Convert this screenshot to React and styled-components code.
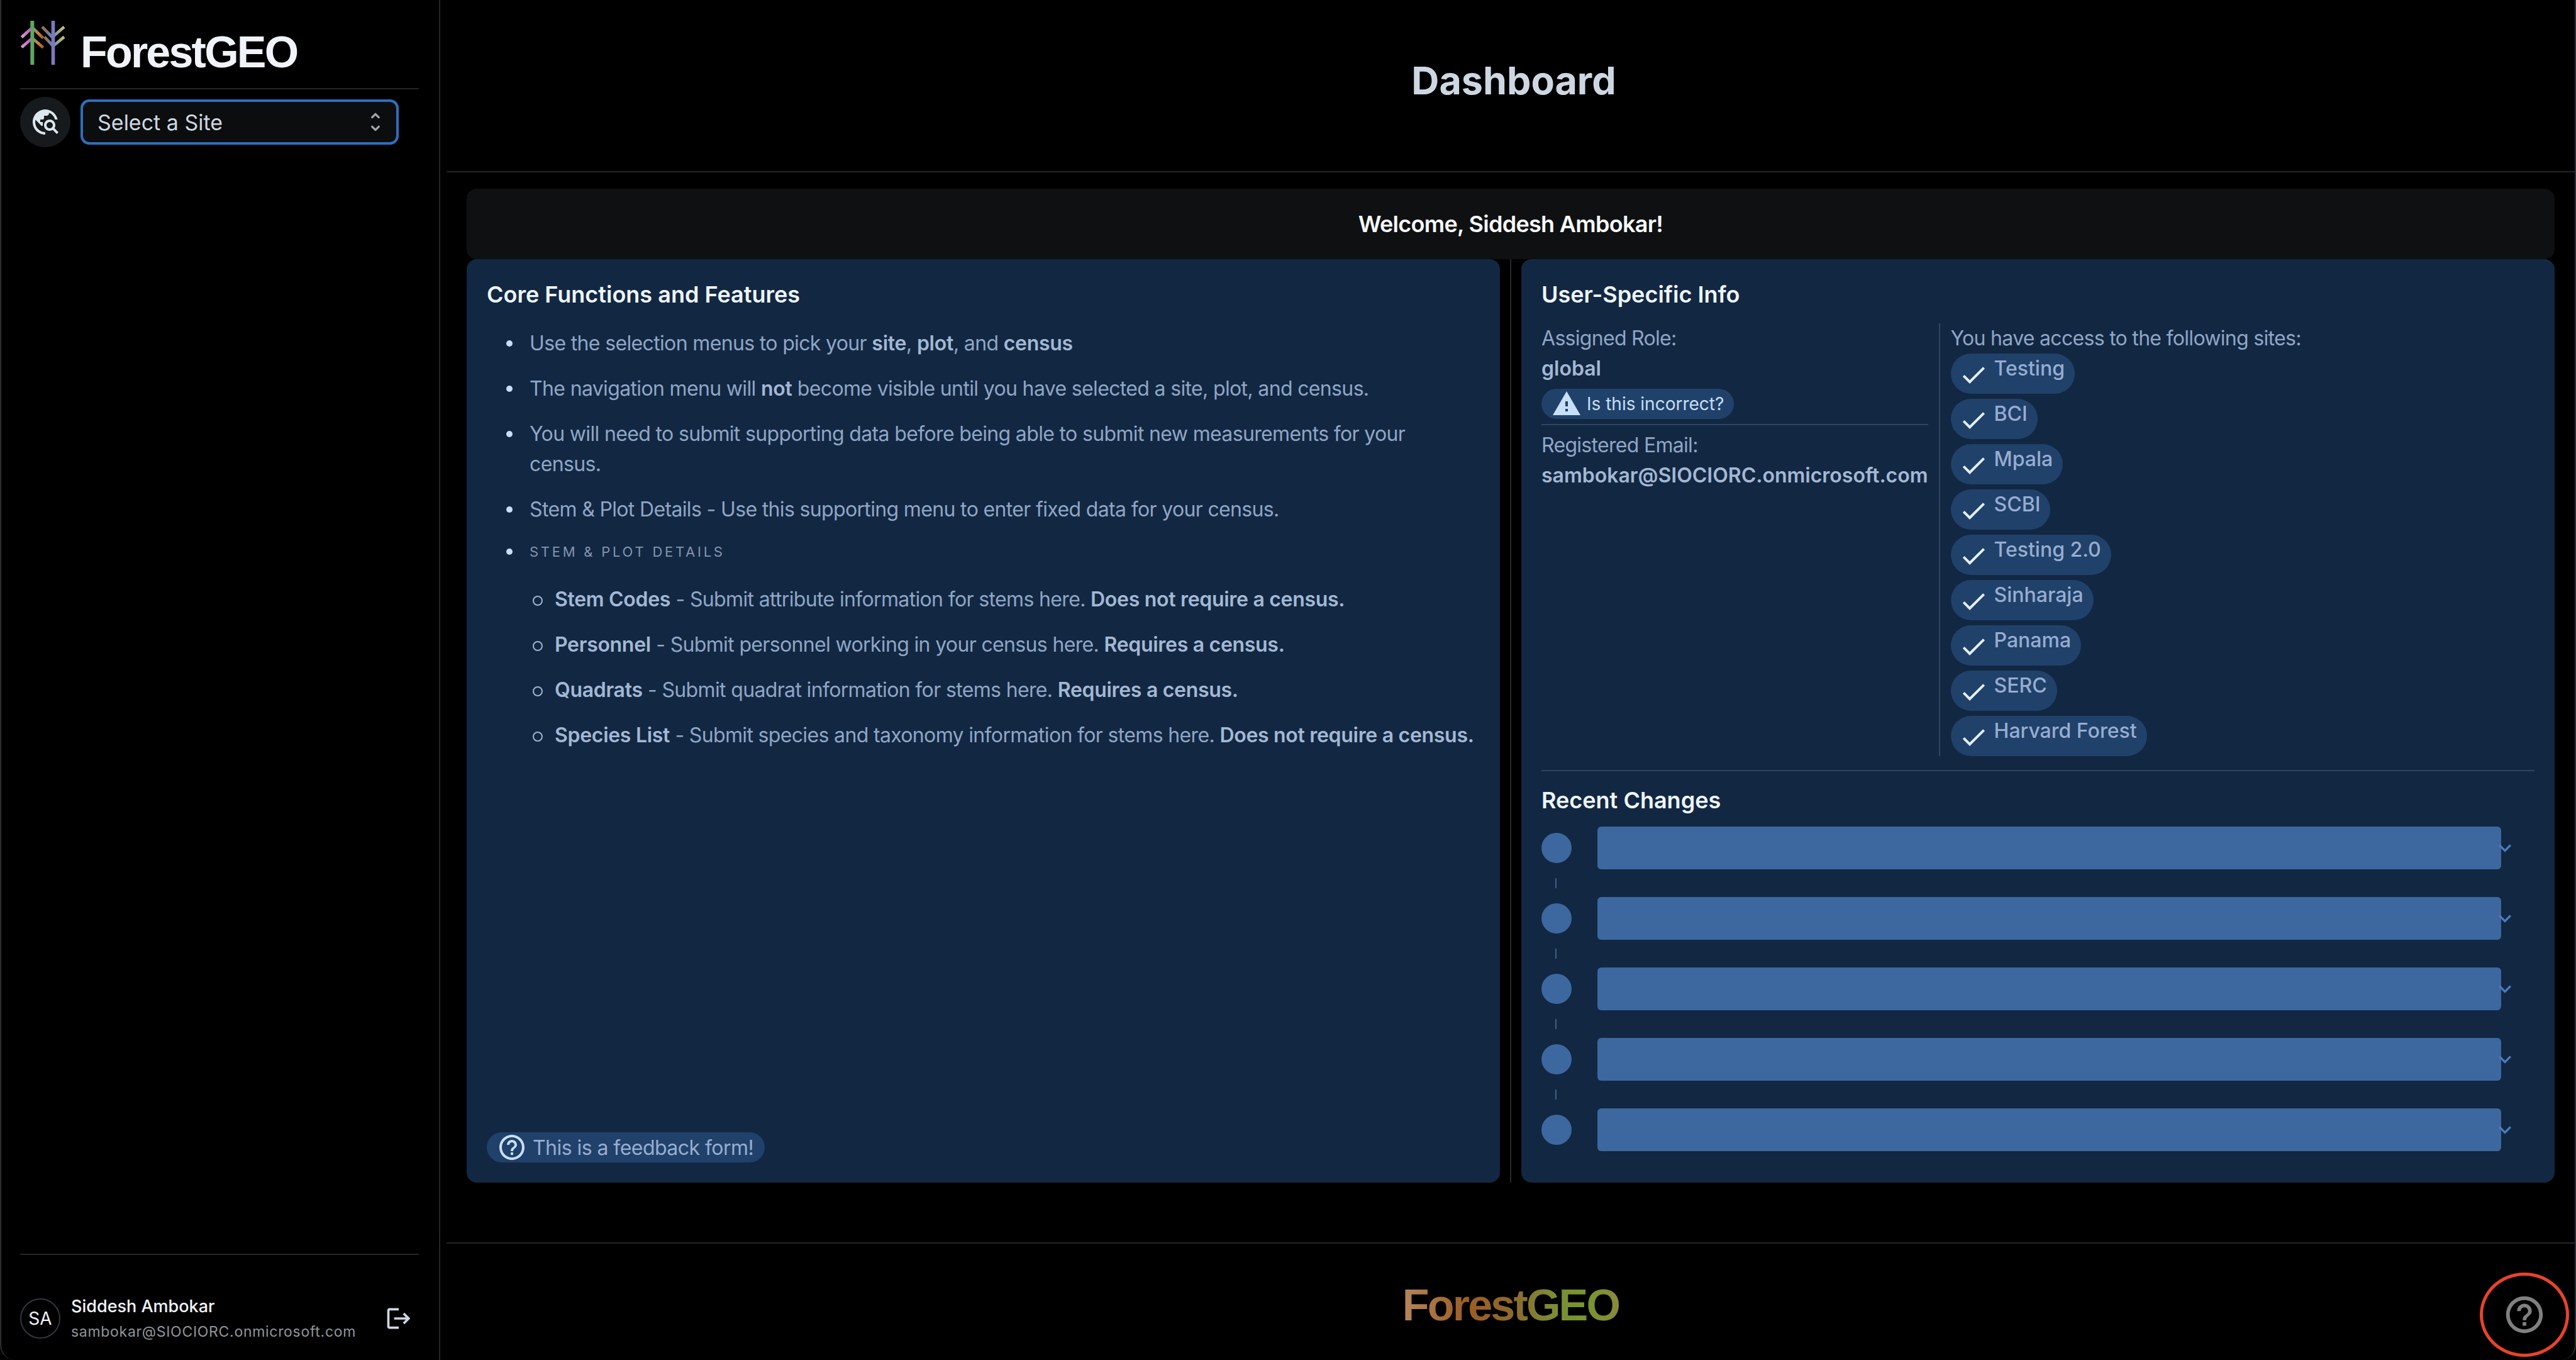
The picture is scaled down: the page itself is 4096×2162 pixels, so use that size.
import React from "react"
import styled, { createGlobalStyle } from "styled-components"
import {
  MdTravelExplore,
  MdLogout,
  MdHelpOutline,
  MdWarning,
  MdCheck,
  MdExpandMore,
} from "react-icons/md"

const sites = ["Testing", "BCI", "Mpala", "SCBI", "Testing 2.0", "Sinharaja", "Panama", "SERC", "Harvard Forest"]

const GlobalStyle = createGlobalStyle`
  html, body {
    margin: 0;
    padding: 0;
    background: #000;
  }
  body {
    font-family: Inter, "Liberation Sans", sans-serif;
    -webkit-font-smoothing: antialiased;
  }
  * {
    box-sizing: border-box;
  }
`

const Frame = styled.div`
  position: relative;
  display: flex;
  width: 4096px;
  height: 2162px;
  overflow: hidden;
  background: #000;
  border-left: 2px solid #2c2e31;
  border-right: 2px solid #2c2e31;
  border-radius: 0 0 24px 24px;
`

const Sidebar = styled.aside`
  display: flex;
  flex-direction: column;
  flex: 0 0 698px;
  padding: 33px 32px 16px 30px;
  border-right: 2px solid #232527;
`

const Brand = styled.div`
  display: flex;
  align-items: flex-start;
  gap: 24px;
  height: 109px;
  border-bottom: 2px solid #232527;
`

const BrandName = styled.span`
  margin-top: 10px;
  font-family: "Liberation Sans", Arial, sans-serif;
  font-size: 70px;
  line-height: 80px;
  font-weight: 700;
  letter-spacing: -2.8px;
  color: #f0f4f8;
`

const SiteRow = styled.div`
  display: flex;
  align-items: center;
  gap: 16px;
  margin-top: 12px;
`

const IconCircle = styled.div`
  display: flex;
  align-items: center;
  justify-content: center;
  width: 80px;
  height: 80px;
  border-radius: 50%;
  background: #171a1c;
  color: #dde7ee;
  font-size: 48px;
`

const SiteSelect = styled.div`
  display: flex;
  align-items: center;
  justify-content: space-between;
  width: 506px;
  height: 72px;
  padding: 0 13px 0 23px;
  background: #0b0d0e;
  border: 4px solid #2f6fc0;
  border-radius: 14px;
  font-size: 34px;
  color: #cdd7e1;
`

const Spacer = styled.div`
  flex: 1;
`

const UserRow = styled.div`
  display: flex;
  align-items: center;
  height: 153px;
  padding-top: 51px;
  border-top: 2px solid #232527;
`

const Avatar = styled.div`
  display: flex;
  align-items: center;
  justify-content: center;
  flex: 0 0 64px;
  height: 64px;
  border: 2px solid #32383e;
  border-radius: 50%;
  font-size: 28px;
  color: #f0f4f8;
`

const UserText = styled.div`
  display: flex;
  flex-direction: column;
  gap: 8px;
  margin-left: 17px;
  flex: 1;
`

const UserName = styled.span`
  font-size: 27px;
  line-height: 34px;
  font-weight: 500;
  color: #f0f4f8;
`

const UserEmail = styled.span`
  font-size: 23px;
  line-height: 30px;
  letter-spacing: 0.7px;
  color: #8f959b;
`

const LogoutIcon = styled.div`
  display: flex;
  margin-right: 10px;
  font-size: 44px;
  color: #cdd7e1;
`

const Main = styled.main`
  display: flex;
  flex-direction: column;
  flex: 1;
  min-width: 0;
  margin-left: 10px;
`

const Header = styled.header`
  display: flex;
  align-items: center;
  justify-content: center;
  flex: 0 0 274px;
  padding: 0 0 16px 10px;
  border-bottom: 2px solid #232527;
  font-size: 61px;
  font-weight: 700;
  color: #cdd7e1;
`

const Content = styled.div`
  display: flex;
  flex-direction: column;
  flex: 0 0 1703px;
  padding: 26px 32px 0 32px;
  border-bottom: 2px solid #232527;
`

const WelcomeBar = styled.div`
  display: flex;
  align-items: center;
  justify-content: center;
  flex: 0 0 112px;
  background: #0e1012;
  border-radius: 16px;
  font-size: 36px;
  font-weight: 600;
  letter-spacing: -0.7px;
  color: #f8fafc;
`

const Columns = styled.div`
  display: flex;
  height: 1468px;
`

const Card = styled.section`
  display: flex;
  flex-direction: column;
  flex: 1;
  min-width: 0;
  padding: 32px;
  background: #122742;
  border-radius: 16px;
`

const ColumnRule = styled.div`
  flex: 0 0 2px;
  margin: 0 16px;
  background: #25282b;
`

const CardTitle = styled.h2`
  margin: ${(p) => p.$top || 0}px 0 0;
  font-size: 36px;
  line-height: 48px;
  font-weight: 600;
  color: #eef5fc;
`

const BulletList = styled.ul`
  display: flex;
  flex-direction: column;
  gap: 24px;
  margin: 30px 0 0;
  padding: 0 0 0 68px;
  list-style: none;
  flex: 1;
`

const SubList = styled.ul`
  display: flex;
  flex-direction: column;
  gap: 24px;
  margin: 33px 0 0;
  padding: 0 0 0 40px;
  list-style: none;
`

const Item = styled.li`
  position: relative;
  font-size: 32px;
  line-height: 48px;
  letter-spacing: -0.65px;
  color: #8fa6c4;
  &::before {
    content: "";
    position: absolute;
    left: -37px;
    top: 19px;
    width: 10px;
    height: 10px;
    border-radius: 50%;
    background: #c7dff7;
  }
`

const OverlineItem = styled(Item)`
  &::before {
    top: 14px;
  }
`

const SubItem = styled(Item)`
  &::before {
    left: -35px;
    top: 18px;
    width: 12px;
    height: 12px;
    background: none;
    border: 2px solid #9fb4cf;
  }
`

const Strong = styled.b`
  font-weight: 600;
  letter-spacing: -0.3px;
  color: #a3b8d3;
`

const Overline = styled.span`
  display: block;
  font-size: 22px;
  line-height: 38px;
  letter-spacing: 3.75px;
  text-transform: uppercase;
  color: #8195af;
`

const Pill = styled.div`
  display: inline-flex;
  align-items: center;
  align-self: flex-start;
  height: 48px;
  background: #20416a;
  border-radius: 24px;
  color: #97add0;
`

const FeedbackPill = styled(Pill)`
  gap: 9px;
  padding: 0 18px 0 16px;
  font-size: 32px;
  letter-spacing: -0.55px;
  svg {
    font-size: 48px;
    color: #c7dff7;
  }
`

const WarningPill = styled(Pill)`
  gap: 8px;
  margin-top: 8px;
  padding: 0 16px;
  font-size: 28px;
  color: #c7dff7;
  svg {
    font-size: 48px;
    color: #c7dff7;
  }
`

const InfoRow = styled.div`
  display: flex;
  margin-top: 22px;
`

const InfoLeft = styled.div`
  display: flex;
  flex-direction: column;
  flex: 0 0 614px;
`

const InfoRule = styled.div`
  flex: 0 0 2px;
  margin: 0 17px;
  background: #2f4560;
`

const InfoRight = styled.div`
  display: flex;
  flex-direction: column;
  align-items: flex-start;
`

const InfoLabel = styled.div`
  margin-top: ${(p) => p.$top || 0}px;
  font-size: 32px;
  line-height: 48px;
  letter-spacing: -0.7px;
  color: #8fa6c4;
`

const InfoValue = styled.div`
  font-size: 32px;
  line-height: 48px;
  font-weight: 600;
  color: #a3b8d3;
  white-space: nowrap;
`

const HRule = styled.div`
  height: 2px;
  background: #2f4560;
  margin: ${(p) => p.$margin};
`

const SiteChips = styled.div`
  display: flex;
  flex-direction: column;
  align-items: flex-start;
  gap: 8px;
`

const SiteChip = styled.div`
  display: flex;
  align-items: flex-start;
  gap: 9px;
  height: 64px;
  padding: 0 16px 0 12px;
  background: #20416a;
  border-radius: 32px;
  font-size: 32px;
  line-height: 48px;
  font-weight: 500;
  color: #97add0;
  svg {
    margin-top: 10px;
    font-size: 48px;
    color: #e3effb;
  }
`

const Timeline = styled.div`
  display: flex;
  flex-direction: column;
  gap: 44px;
  margin-top: 18px;
`

const TimelineRow = styled.div`
  position: relative;
  display: flex;
  align-items: center;
  gap: 41px;
  height: 68px;
`

const Dot = styled.div`
  flex: 0 0 48px;
  height: 48px;
  border-radius: 50%;
  background: #3c689f;
`

const Connector = styled.div`
  position: absolute;
  left: 22px;
  top: 82px;
  width: 2px;
  height: 16px;
  background: #3f5f86;
`

const Bar = styled.div`
  flex: 0 0 1437px;
  height: 68px;
  border-radius: 6px;
  background: #3c689f;
`

const Chevron = styled.div`
  display: flex;
  margin-left: -55px;
  font-size: 40px;
  color: #4a7cba;
`

const Footer = styled.footer`
  display: flex;
  align-items: center;
  justify-content: center;
  flex: 1;
`

const FooterLogo = styled.span`
  margin-top: 10px;
  font-family: "Liberation Sans", Arial, sans-serif;
  font-size: 70px;
  font-weight: 700;
  letter-spacing: -2.8px;
  background: linear-gradient(90deg, #b5865a 0%, #9c5c26 30%, #8d6a2c 52%, #7d8a36 68%, #75972f 84%, #8a8a3a 100%);
  -webkit-background-clip: text;
  background-clip: text;
  color: transparent;
`

const HelpButton = styled.div`
  position: absolute;
  right: 9px;
  bottom: 5px;
  display: flex;
  align-items: center;
  justify-content: center;
  width: 142px;
  height: 134px;
  border: 5px solid #e8432a;
  border-radius: 50%;
  font-size: 70px;
  color: #808080;
`

const ForestLogo = () => (
  <svg width="72" height="70" viewBox="96 99 216 210" style={{ flex: "0 0 72px" }}>
    <defs>
      <linearGradient id="lg-a" x1="0" y1="1" x2="1" y2="0">
        <stop offset="0" stopColor="#d4a0d0" />
        <stop offset="1" stopColor="#c050c8" />
      </linearGradient>
      <linearGradient id="lg-b" x1="0" y1="0" x2="1" y2="1">
        <stop offset="0" stopColor="#5fa860" />
        <stop offset="0.5" stopColor="#d08038" />
        <stop offset="1" stopColor="#a85a30" />
      </linearGradient>
      <linearGradient id="lg-c" x1="0" y1="0" x2="1" y2="1">
        <stop offset="0" stopColor="#a06a40" />
        <stop offset="1" stopColor="#5a90d0" />
      </linearGradient>
      <linearGradient id="lg-d" x1="0" y1="1" x2="1" y2="0">
        <stop offset="0" stopColor="#6a98a0" />
        <stop offset="1" stopColor="#c8c070" />
      </linearGradient>
    </defs>
    <g fill="none" strokeWidth="14">
      <path d="M150 135 L103 178" stroke="url(#lg-a)" />
      <path d="M150 185 L103 226" stroke="url(#lg-a)" />
      <path d="M158 135 L206 182" stroke="url(#lg-b)" />
      <path d="M158 185 L206 227" stroke="url(#lg-b)" />
      <path d="M201 128 L250 178" stroke="url(#lg-c)" />
      <path d="M212 176 L250 216" stroke="url(#lg-c)" />
      <path d="M306 128 L258 170" stroke="url(#lg-d)" />
      <path d="M306 176 L258 216" stroke="url(#lg-d)" />
    </g>
    <rect x="145" y="99" width="18" height="210" fill="#5fa663" />
    <rect x="245" y="99" width="17" height="210" fill="#7f78bd" />
  </svg>
)

const UnfoldIcon = () => (
  <svg width="40" height="40" viewBox="0 0 24 24" fill="#9fa6ad">
    <path d="m12 5.83 2.46 2.46c.39.39 1.02.39 1.41 0 .39-.39.39-1.02 0-1.41L12.7 3.7a.9959.9959 0 0 0-1.41 0L8.12 6.88c-.39.39-.39 1.02 0 1.41.39.39 1.02.39 1.41 0L12 5.83zm0 12.34-2.46-2.46a.9959.9959 0 0 0-1.41 0c-.39.39-.39 1.02 0 1.41l3.17 3.18c.39.39 1.02.39 1.41 0l3.17-3.17c.39-.39.39-1.02 0-1.41a.9959.9959 0 0 0-1.41 0L12 18.17z" />
  </svg>
)

export default function App() {
  return (
    <>
      <GlobalStyle />
      <Frame>
        <Sidebar>
          <Brand>
            <ForestLogo />
            <BrandName>ForestGEO</BrandName>
          </Brand>
          <SiteRow>
            <IconCircle>
              <MdTravelExplore />
            </IconCircle>
            <SiteSelect>
              Select a Site
              <UnfoldIcon />
            </SiteSelect>
          </SiteRow>
          <Spacer />
          <UserRow>
            <Avatar>SA</Avatar>
            <UserText>
              <UserName>Siddesh Ambokar</UserName>
              <UserEmail>sambokar@SIOCIORC.onmicrosoft.com</UserEmail>
            </UserText>
            <LogoutIcon>
              <MdLogout />
            </LogoutIcon>
          </UserRow>
        </Sidebar>
        <Main>
          <Header>Dashboard</Header>
          <Content>
            <WelcomeBar>Welcome, Siddesh Ambokar!</WelcomeBar>
            <Columns>
              <Card>
                <CardTitle>Core Functions and Features</CardTitle>
                <BulletList>
                  <Item>
                    Use the selection menus to pick your <Strong>site</Strong>, <Strong>plot</Strong>, and{" "}
                    <Strong>census</Strong>
                  </Item>
                  <Item>
                    The navigation menu will <Strong>not</Strong> become visible until you have selected a site, plot,
                    and census.
                  </Item>
                  <Item>
                    You will need to submit supporting data before being able to submit new measurements for your
                    census.
                  </Item>
                  <Item>Stem &amp; Plot Details - Use this supporting menu to enter fixed data for your census.</Item>
                  <OverlineItem>
                    <Overline>Stem &amp; Plot Details</Overline>
                    <SubList>
                      <SubItem>
                        <Strong>Stem Codes</Strong> - Submit attribute information for stems here.{" "}
                        <Strong>Does not require a census.</Strong>
                      </SubItem>
                      <SubItem>
                        <Strong>Personnel</Strong> - Submit personnel working in your census here.{" "}
                        <Strong>Requires a census.</Strong>
                      </SubItem>
                      <SubItem>
                        <Strong>Quadrats</Strong> - Submit quadrat information for stems here.{" "}
                        <Strong>Requires a census.</Strong>
                      </SubItem>
                      <SubItem>
                        <Strong>Species List</Strong> - Submit species and taxonomy information for stems here.{" "}
                        <Strong>Does not require a census.</Strong>
                      </SubItem>
                    </SubList>
                  </OverlineItem>
                </BulletList>
                <FeedbackPill>
                  <MdHelpOutline />
                  This is a feedback form!
                </FeedbackPill>
              </Card>
              <ColumnRule />
              <Card>
                <CardTitle>User-Specific Info</CardTitle>
                <InfoRow>
                  <InfoLeft>
                    <InfoLabel>Assigned Role:</InfoLabel>
                    <InfoValue>global</InfoValue>
                    <WarningPill>
                      <MdWarning />
                      Is this incorrect?
                    </WarningPill>
                    <HRule $margin="8px 0 0" />
                    <InfoLabel $top={8}>Registered Email:</InfoLabel>
                    <InfoValue>sambokar@SIOCIORC.onmicrosoft.com</InfoValue>
                  </InfoLeft>
                  <InfoRule />
                  <InfoRight>
                    <InfoLabel>You have access to the following sites:</InfoLabel>
                    <SiteChips>
                      {sites.map((site) => (
                        <SiteChip key={site}>
                          <MdCheck />
                          {site}
                        </SiteChip>
                      ))}
                    </SiteChips>
                  </InfoRight>
                </InfoRow>
                <HRule $margin="22px 0 0" />
                <CardTitle $top={22}>Recent Changes</CardTitle>
                <Timeline>
                  {[0, 1, 2, 3, 4].map((n) => (
                    <TimelineRow key={n}>
                      <Dot />
                      {n < 4 && <Connector />}
                      <Bar />
                      <Chevron>
                        <MdExpandMore />
                      </Chevron>
                    </TimelineRow>
                  ))}
                </Timeline>
              </Card>
            </Columns>
          </Content>
          <Footer>
            <FooterLogo>ForestGEO</FooterLogo>
          </Footer>
        </Main>
        <HelpButton>
          <MdHelpOutline />
        </HelpButton>
      </Frame>
    </>
  )
}
